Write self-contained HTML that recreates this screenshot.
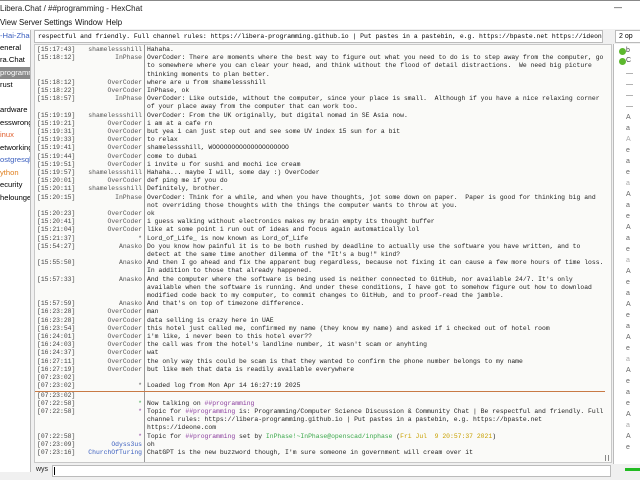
<!DOCTYPE html>
<html><head><meta charset="utf-8"><style>
*{margin:0;padding:0;box-sizing:border-box}
body{width:640px;height:480px;overflow:hidden;background:#f0f0f0;font-family:"Liberation Sans",sans-serif;position:relative}
.title{position:absolute;left:0;top:0;width:640px;height:16px;background:#fff;font-size:8px;color:#222;line-height:16px;border-top:1px solid #888}
.menu{position:absolute;left:0;top:16px;width:640px;height:13px;background:#fff;font-size:7.8px;line-height:13px;color:#111}
.menu span{position:absolute}
.tree{position:absolute;left:0;top:30px;width:31px;height:442px;background:#fff;border-right:1px solid #bbb;font-size:7.6px;overflow:hidden}
.tree div{position:absolute;left:0;white-space:nowrap;height:12px;line-height:12px;width:31px}
.topic{position:absolute;left:34px;top:30px;width:569px;height:13px;background:#fff;border:1px solid #bbb;font:6.4px "Liberation Mono",monospace;line-height:11px;padding-left:3px;white-space:nowrap;overflow:hidden}
.chat{position:absolute;left:34px;top:44px;width:578px;height:419px;background:#fafaf8;border:1px solid #c8c8c8;overflow:hidden;font:6.4px "Liberation Mono",monospace;color:#222}
.sep{position:absolute;left:109px;top:0;width:1px;height:419px;background:#999}
.r{position:absolute;left:0;height:8.2px;line-height:8.2px;white-space:pre}
.t{position:absolute;left:2px;color:#444}
.n{position:absolute;right:-107px;width:80px;text-align:right;color:#555}
.m{position:absolute;left:112px;color:#222}
.ulist{position:absolute;left:613px;top:44px;width:27px;height:420px;background:#fff;border-left:1px solid #bbb;font-size:7px;color:#444;overflow:hidden}
.ulist .u{position:absolute;left:12px;color:#666}
.dot{position:absolute;left:5px;width:7px;height:7px;border-radius:50%;background:#5cb82e}
.input{position:absolute;left:34px;top:465px;width:578px;height:12px}
.pur{color:#8b3d9e}.grn{color:#3aa84a}.blu{color:#3b5fbf}.yel{color:#c8a000}
</style></head><body>
<div class="title"><span style="position:absolute;left:0">Libera.Chat / ##programming - HexChat</span><span style="position:absolute;left:614px;top:-1px">—</span></div>
<div class="menu"><span style="left:0">View</span><span style="left:19px">Server</span><span style="left:44px">Settings</span><span style="left:75px">Window</span><span style="left:106px">Help</span></div>
<div class="tree">
<div style="top:0;color:#3b5fbf">-Hai-Zhao</div>
<div style="top:12px">eneral</div>
<div style="top:24px">ra.Chat</div>
<div style="top:37px;background:#8a8a8a;color:#fff">programming</div>
<div style="top:49px">rust</div>
<div style="top:74px">ardware</div>
<div style="top:87px">esswrong</div>
<div style="top:99px;color:#e06030">inux</div>
<div style="top:112px">etworking</div>
<div style="top:124px;color:#3b5fbf">ostgresql</div>
<div style="top:137px;color:#e08020">ython</div>
<div style="top:149px">ecurity</div>
<div style="top:162px">helounge</div>
</div>
<div class="topic">respectful and friendly. Full channel rules: https://libera-programming.github.io | Put pastes in a pastebin, e.g. https://bpaste.net https://ideone.com</div>
<div style="position:absolute;left:615px;top:30px;width:30px;height:13px;background:#fff;border:1px solid #bbb;font-size:7px;line-height:11px;padding-left:3px">2 op</div>
<div class="chat"><div class="sep"></div>
<div class="r" style="top:1px"><span class="t">[15:17:43]</span><span class="n">shamelessshill</span><span class="m">Hahaha.</span></div>
<div class="r" style="top:9.2px"><span class="t">[15:18:12]</span><span class="n">InPhase</span><span class="m">OverCoder: There are moments where the best way to figure out what you need to do is to step away from the computer, go
to somewhere where you can clear your head, and think without the flood of detail distractions.  We need big picture
thinking moments to plan better.</span></div>
<div class="r" style="top:33.8px"><span class="t">[15:18:12]</span><span class="n">OverCoder</span><span class="m">where are u from shamelessshill</span></div>
<div class="r" style="top:42px"><span class="t">[15:18:22]</span><span class="n">OverCoder</span><span class="m">InPhase, ok</span></div>
<div class="r" style="top:50.2px"><span class="t">[15:18:57]</span><span class="n">InPhase</span><span class="m">OverCoder: Like outside, without the computer, since your place is small.  Although if you have a nice relaxing corner
of your place away from the computer that can work too.</span></div>
<div class="r" style="top:66.6px"><span class="t">[15:19:19]</span><span class="n">shamelessshill</span><span class="m">OverCoder: From the UK originally, but digital nomad in SE Asia now.</span></div>
<div class="r" style="top:74.8px"><span class="t">[15:19:21]</span><span class="n">OverCoder</span><span class="m">i am at a cafe rn</span></div>
<div class="r" style="top:83px"><span class="t">[15:19:31]</span><span class="n">OverCoder</span><span class="m">but yea i can just step out and see some UV index 15 sun for a bit</span></div>
<div class="r" style="top:91.2px"><span class="t">[15:19:33]</span><span class="n">OverCoder</span><span class="m">to relax</span></div>
<div class="r" style="top:99.4px"><span class="t">[15:19:41]</span><span class="n">OverCoder</span><span class="m">shamelessshill, WOOOOOOOOOOOOOOOOOOOO</span></div>
<div class="r" style="top:107.6px"><span class="t">[15:19:44]</span><span class="n">OverCoder</span><span class="m">come to dubai</span></div>
<div class="r" style="top:115.8px"><span class="t">[15:19:51]</span><span class="n">OverCoder</span><span class="m">i invite u for sushi and mochi ice cream</span></div>
<div class="r" style="top:124px"><span class="t">[15:19:57]</span><span class="n">shamelessshill</span><span class="m">Hahaha... maybe I will, some day :) OverCoder</span></div>
<div class="r" style="top:132.2px"><span class="t">[15:20:01]</span><span class="n">OverCoder</span><span class="m">def ping me if you do</span></div>
<div class="r" style="top:140.4px"><span class="t">[15:20:11]</span><span class="n">shamelessshill</span><span class="m">Definitely, brother.</span></div>
<div class="r" style="top:148.6px"><span class="t">[15:20:15]</span><span class="n">InPhase</span><span class="m">OverCoder: Think for a while, and when you have thoughts, jot some down on paper.  Paper is good for thinking big and
not overriding those thoughts with the things the computer wants to throw at you.</span></div>
<div class="r" style="top:165px"><span class="t">[15:20:23]</span><span class="n">OverCoder</span><span class="m">ok</span></div>
<div class="r" style="top:173.2px"><span class="t">[15:20:41]</span><span class="n">OverCoder</span><span class="m">i guess walking without electronics makes my brain empty its thought buffer</span></div>
<div class="r" style="top:181.4px"><span class="t">[15:21:04]</span><span class="n">OverCoder</span><span class="m">like at some point i run out of ideas and focus again automatically lol</span></div>
<div class="r" style="top:189.6px"><span class="t">[15:21:37]</span><span class="n">*</span><span class="m">Lord_of_Life_ is now known as Lord_of_Life</span></div>
<div class="r" style="top:197.8px"><span class="t">[15:54:27]</span><span class="n">Anasko</span><span class="m">Do you know how painful it is to be both rushed by deadline to actually use the software you have written, and to
detect at the same time another dilemma of the "It's a bug!" kind?</span></div>
<div class="r" style="top:214.2px"><span class="t">[15:55:50]</span><span class="n">Anasko</span><span class="m">And then I go ahead and fix the apparent bug regardless, because not fixing it can cause a few more hours of time loss.
In addition to those that already happened.</span></div>
<div class="r" style="top:230.6px"><span class="t">[15:57:33]</span><span class="n">Anasko</span><span class="m">And the computer where the software is being used is neither connected to GitHub, nor available 24/7. It's only
available when the software is running. And under these conditions, I have got to somehow figure out how to download
modified code back to my computer, to commit changes to GitHub, and to proof-read the jamble.</span></div>
<div class="r" style="top:255.2px"><span class="t">[15:57:59]</span><span class="n">Anasko</span><span class="m">And that's on top of timezone difference.</span></div>
<div class="r" style="top:263.4px"><span class="t">[16:23:28]</span><span class="n">OverCoder</span><span class="m">man</span></div>
<div class="r" style="top:271.6px"><span class="t">[16:23:28]</span><span class="n">OverCoder</span><span class="m">data selling is crazy here in UAE</span></div>
<div class="r" style="top:279.8px"><span class="t">[16:23:54]</span><span class="n">OverCoder</span><span class="m">this hotel just called me, confirmed my name (they know my name) and asked if i checked out of hotel room</span></div>
<div class="r" style="top:288px"><span class="t">[16:24:01]</span><span class="n">OverCoder</span><span class="m">i'm like, i never been to this hotel ever??</span></div>
<div class="r" style="top:296.2px"><span class="t">[16:24:03]</span><span class="n">OverCoder</span><span class="m">the call was from the hotel's landline number, it wasn't scam or anyhting</span></div>
<div class="r" style="top:304.4px"><span class="t">[16:24:37]</span><span class="n">OverCoder</span><span class="m">wat</span></div>
<div class="r" style="top:312.6px"><span class="t">[16:27:11]</span><span class="n">OverCoder</span><span class="m">the only way this could be scam is that they wanted to confirm the phone number belongs to my name</span></div>
<div class="r" style="top:320.8px"><span class="t">[16:27:19]</span><span class="n">OverCoder</span><span class="m">but like meh that data is readily available everywhere</span></div>
<div class="r" style="top:329px"><span class="t">[07:23:02]</span></div>
<div class="r" style="top:337.2px"><span class="t">[07:23:02]</span><span class="n">*</span><span class="m">Loaded log from Mon Apr 14 16:27:19 2025</span></div>
<div style="position:absolute;left:0;top:346px;width:570px;height:1px;background:#c87a45"></div>
<div class="r" style="top:346.6px"><span class="t">[07:23:02]</span></div>
<div class="r" style="top:354.8px"><span class="t">[07:22:58]</span><span class="n grn">*</span><span class="m">Now talking on <span class="pur">##programming</span></span></div>
<div class="r" style="top:363px"><span class="t">[07:22:58]</span><span class="n pur">*</span><span class="m">Topic for <span class="pur">##programming</span> is: Programming/Computer Science Discussion &amp; Community Chat | Be respectful and friendly. Full
channel rules: https://libera-programming.github.io | Put pastes in a pastebin, e.g. https://bpaste.net
https://ideone.com</span></div>
<div class="r" style="top:387.6px"><span class="t">[07:22:58]</span><span class="n pur">*</span><span class="m">Topic for <span class="pur">##programming</span> set by <span class="grn">InPhase!~InPhase@openscad/inphase</span> (<span class="yel">Fri Jul  9 20:57:37 2021</span>)</span></div>
<div class="r" style="top:395.8px"><span class="t">[07:23:09]</span><span class="n blu">Odyss3us</span><span class="m">oh</span></div>
<div class="r" style="top:404px"><span class="t">[07:23:16]</span><span class="n blu">ChurchOfTuring</span><span class="m">ChatGPT is the new buzzword though, I'm sure someone in government will cream over it</span></div>
<div style="position:absolute;left:570px;top:410px;width:4px;height:6px;border-left:1px solid #888;border-right:1px solid #888"></div>
</div>
<div class="ulist">
<div class="dot" style="top:4px"></div><div class="dot" style="top:14px"></div>
<div style="position:absolute;left:12px;top:2px;line-height:10px">b<br>C</div>
<div class="u" style="top:26px">—</div><div class="u" style="top:37px">—</div><div class="u" style="top:48px">—</div><div class="u" style="top:59px">—</div>
<div class="u" style="top:70px">A</div><div class="u" style="top:81px">a</div><div class="u" style="top:92px;color:#aaa">A</div><div class="u" style="top:103px">e</div><div class="u" style="top:114px">a</div><div class="u" style="top:125px">e</div><div class="u" style="top:136px;color:#aaa">a</div><div class="u" style="top:147px">A</div><div class="u" style="top:158px">a</div><div class="u" style="top:169px">e</div><div class="u" style="top:180px">A</div><div class="u" style="top:191px">a</div><div class="u" style="top:202px">e</div><div class="u" style="top:213px;color:#aaa">a</div><div class="u" style="top:224px">A</div><div class="u" style="top:235px">e</div><div class="u" style="top:246px">a</div><div class="u" style="top:257px">A</div><div class="u" style="top:268px">e</div><div class="u" style="top:279px">a</div><div class="u" style="top:290px">A</div><div class="u" style="top:301px">e</div><div class="u" style="top:312px;color:#aaa">a</div><div class="u" style="top:323px">A</div><div class="u" style="top:334px">e</div><div class="u" style="top:345px">a</div><div class="u" style="top:356px">e</div><div class="u" style="top:367px">A</div><div class="u" style="top:378px;color:#aaa">a</div><div class="u" style="top:389px">A</div><div class="u" style="top:400px">e</div>
</div>
<div style="position:absolute;left:625px;top:468px;width:15px;height:3px;background:#22bb22"></div>
<div class="input"><span style="position:absolute;left:2px;top:1px;font-size:7px;color:#222">wys</span><div style="position:absolute;left:18px;top:0;width:559px;height:12px;background:#fff;border:1px solid #bbb"></div><div style="position:absolute;left:20px;top:2px;width:1px;height:8px;background:#000"></div></div>
</body></html>
